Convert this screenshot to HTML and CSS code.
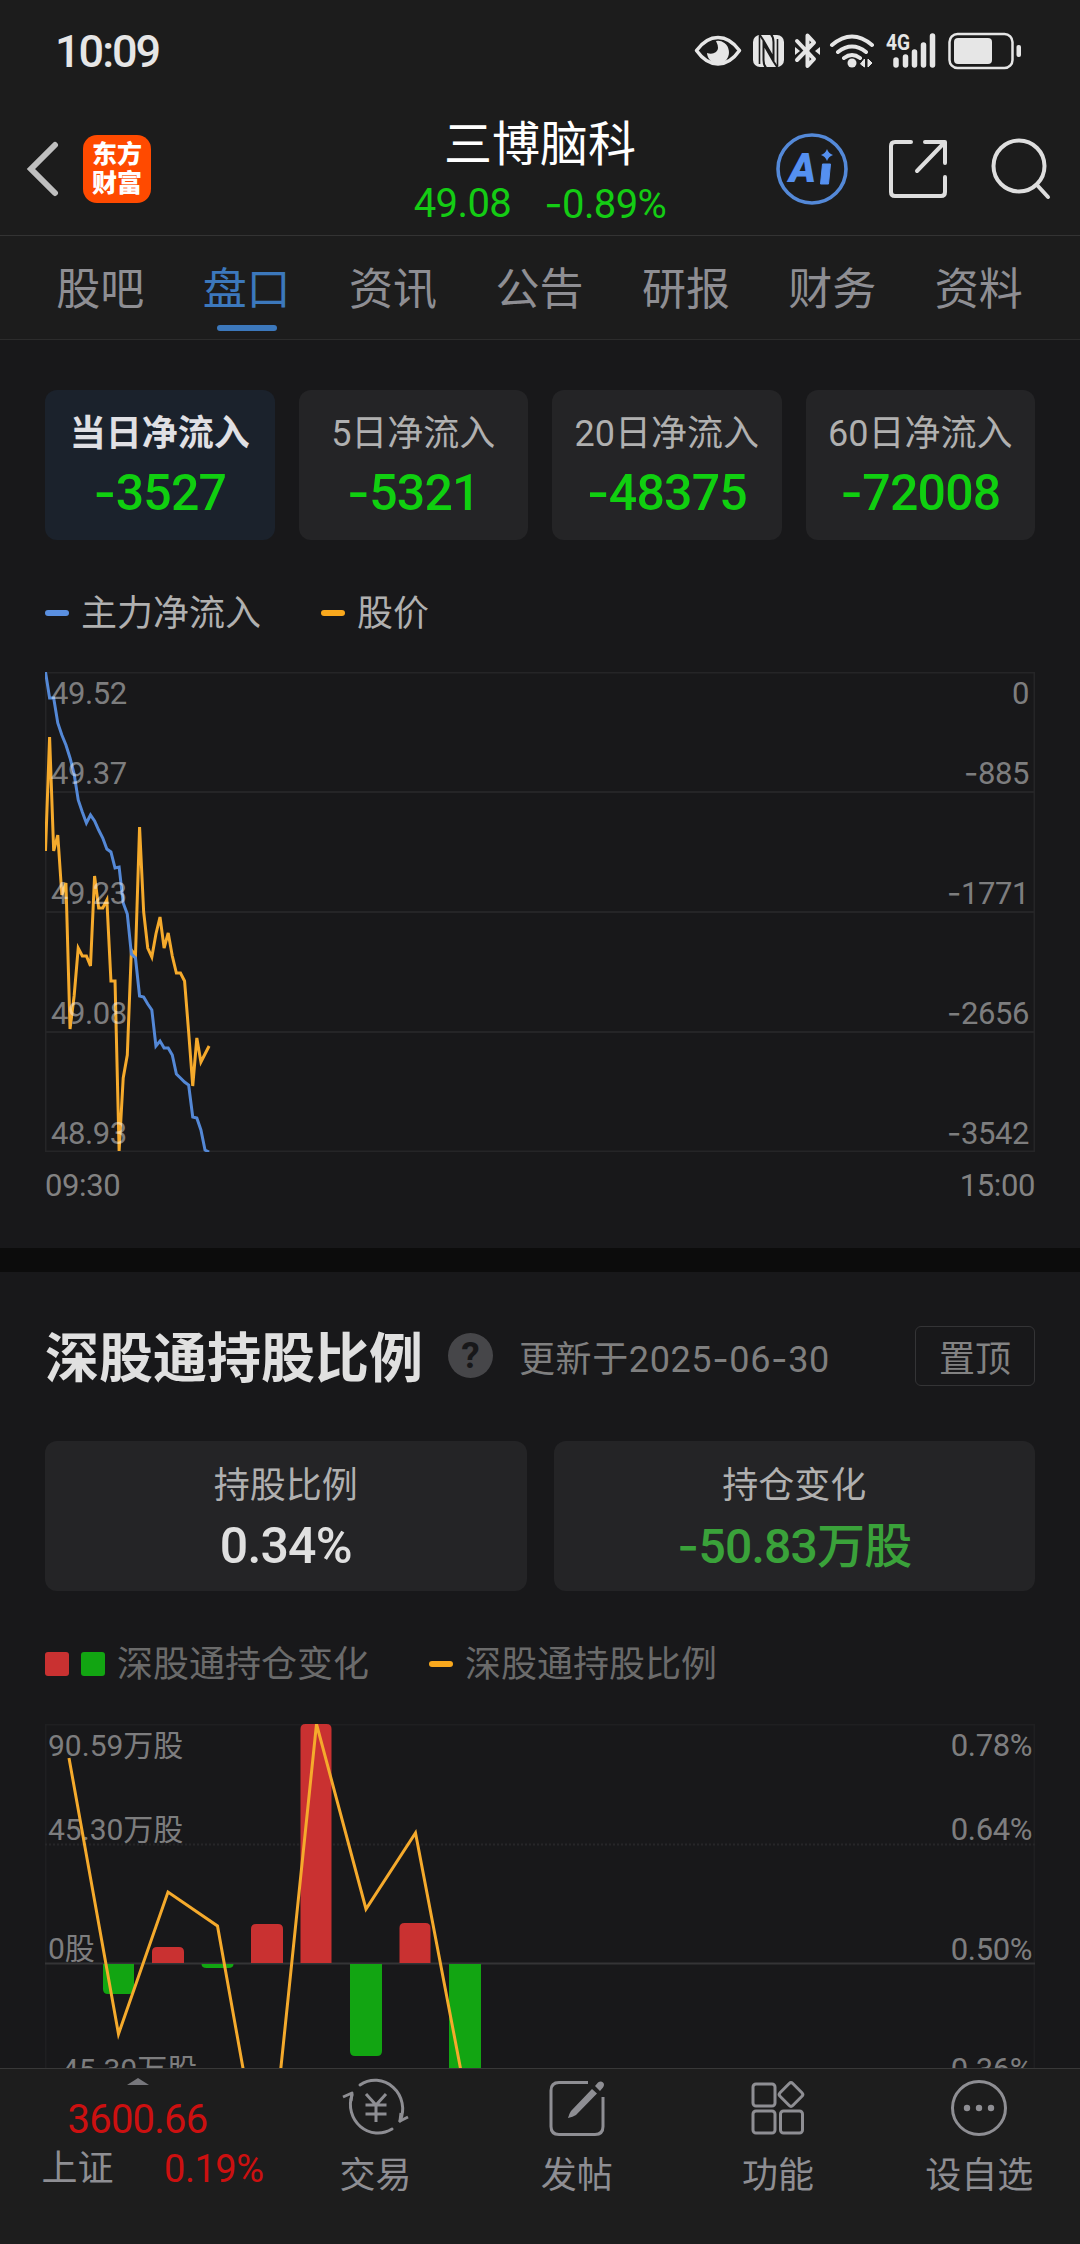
FILE: index.html
```
<!DOCTYPE html>
<html lang="zh-CN">
<head>
  <meta charset="UTF-8" />
  <meta name="viewport" content="width=device-width, initial-scale=1.0"/>
  <title>三博脑科 - 盘口</title>
  <link rel="stylesheet" href="styles.css">
</head>
<body>
  <div class="app">
    <div class="status-bar">
      <span class="clock">10:09</span>
      <svg class="status-icons" viewBox="0 0 330 40" width="330" height="40">
        <!-- eye -->
        <path d="M2.500 19.500Q12 6.500 24 6.500T45.500 19.500Q36 33 24 33T2.500 19.500Z" fill="none" stroke="#e6e6e6" stroke-width="3.500" stroke-linejoin="round"/>
        <path d="M22 10a11 11.500 0 1 1-9 12q5 2 9-1t0-11z" fill="#e6e6e6"/>
        <!-- nfc -->
        <rect x="59" y="4" width="31" height="32" rx="7" fill="#e6e6e6"/>
        <path d="M65.500 3.500q2 3 4 6L79.500 27V11q0-5-2.500-7.500M83.500 36.500q-2-3-4-6L69.500 13v16q0 5 2.500 7.500" fill="none" stroke="#1c1c1c" stroke-width="2"/>
        <path d="M65.500 5v28M83.500 8v27" stroke="#1c1c1c" stroke-width="1.600"/>
        <!-- bluetooth -->
        <path d="M103 10l17 18-6.500 7V4.500l6.500 7L103 29" fill="none" stroke="#e6e6e6" stroke-width="4" stroke-linejoin="round" stroke-linecap="round"/>
        <path d="M101 16l5 4-5 4zM126 16l-5 4 5 4z" fill="#e6e6e6"/>
        <!-- wifi -->
        <path d="M138 14q20-17 40 0M144 21q14-11 28 0M150 27q8-6 16 0" fill="none" stroke="#e6e6e6" stroke-width="4" stroke-linecap="round"/>
        <circle cx="158" cy="32" r="4.500" fill="#e6e6e6"/>
        <path d="M170.500 28v8l-4-3zM174 28v8l4-4z" fill="#e6e6e6" stroke="#e6e6e6" stroke-width="1"/>
        <!-- signal -->
        <text x="192" y="19" class="net" textLength="24" lengthAdjust="spacingAndGlyphs">4G</text>
        <path d="M202 29v5M211.500 26v8M220.500 21v13M229.500 14v20M238.500 5v29" stroke="#e6e6e6" stroke-width="5.500" stroke-linecap="round"/>
        <!-- battery -->
        <rect x="255.500" y="3" width="63" height="34" rx="8" fill="none" stroke="#e6e6e6" stroke-width="2.500"/>
        <rect x="260" y="7" width="38" height="26" rx="4" fill="#e6e6e6"/>
        <rect x="322.500" y="14" width="4.500" height="12" rx="2" fill="#e6e6e6"/>
      </svg>
    </div>

    <header class="header">
      <div class="header-left">
        <svg viewBox="0 0 34 56" width="34" height="56"><path d="M30 4L6 28l24 24" fill="none" stroke="#bfbfbf" stroke-width="6" stroke-linecap="round"/></svg>
        <div class="logo"><span>东方</span><span>财富</span></div>
      </div>
      <div class="stock">
        <h1>三博脑科</h1>
        <p class="quote"><span>49.08</span><span><i>-</i>0.89%</span></p>
      </div>
      <div class="header-right">
        <svg viewBox="0 0 72 72" width="72" height="72">
          <circle cx="36" cy="36" r="34" fill="none" stroke="#5489d8" stroke-width="3.600"/>
          <text x="13" y="49" class="ai">A</text>
          <path d="M46.500 31h8l-2 20h-8z" fill="#5590f0" stroke="#5590f0" stroke-linejoin="round"/>
          <path d="M51 16q1.500 4.500 6 6-4.500 1.500-6 6-1.500-4.500-6-6 4.500-1.500 6-6z" fill="#5590f0"/>
        </svg>
        <svg viewBox="0 0 60 60" width="60" height="60"><path d="M22 3H6q-4 0-4 4v46q0 4 4 4h46q4 0 4-4V38M36 3h20v21M55 4L28 32" fill="none" stroke="#dedede" stroke-width="4" stroke-linecap="round" stroke-linejoin="round"/></svg>
        <svg viewBox="0 0 60 62" width="60" height="62"><circle cx="28" cy="28" r="25.500" fill="none" stroke="#dedede" stroke-width="4"/><path d="M46 47l11 12" stroke="#dedede" stroke-width="4" stroke-linecap="round"/></svg>
      </div>
    </header>

    <nav class="tabs">
      <a>股吧</a>
      <a class="active">盘口</a>
      <a>资讯</a>
      <a>公告</a>
      <a>研报</a>
      <a>财务</a>
      <a>资料</a>
    </nav>

    <main>
      <section class="flow">
        <div class="cards">
          <div class="card active"><span class="label">当日净流入</span><b><i>-</i>3527</b></div>
          <div class="card"><span class="label">5日净流入</span><b><i>-</i>5321</b></div>
          <div class="card"><span class="label">20日净流入</span><b><i>-</i>48375</b></div>
          <div class="card"><span class="label">60日净流入</span><b><i>-</i>72008</b></div>
        </div>
        <div class="legend">
          <span><em class="dash blue"></em>主力净流入</span>
          <span><em class="dash orange"></em>股价</span>
        </div>
        <svg class="chart" viewBox="0 0 990 480" width="990" height="480">
          <path class="grid" d="M.5 .5H989.500V479.500H.5zM0 120H990M0 240H990M0 360H990"/>
          <!-- x unit is one trading minute -->
          <g transform="translate(.5 0) scale(4.090 1)">
            <polyline class="line price" points="0,179 1,65 2,179 3,163 4,223 5,211 6,357 7,324 8,276 9,284 10,284 11,294 12,204 13,236 14,236 15,228 16,309 17,309 18,479 19,406 20,383 21,278 22,283 23,155 24,240 25,276 26,285 27,262 28,245 29,276 30,261 31,284 32,301 33,301 34,309 35,360 36,414 37,366 38,390 39,382 40,374"/>
            <polyline class="line main-flow" points="0,0 1,26 2,26 3,51 4,63 5,73 6,86 7,102 8,128 9,140 10,151 11,143 12,149 13,158 14,166 15,177 16,180 17,196 18,195 19,231 20,242 21,282 22,286 23,324 24,325 25,332 26,338 27,374 28,369 29,376 30,376 31,383 32,402 33,406 34,410 35,413 36,445 37,446 38,458 39,478 40,480"/>
          </g>
          <g class="axis">
            <text x="6" y="32">49.52</text>
            <text x="6" y="112">49.37</text>
            <text x="6" y="232">49.23</text>
            <text x="6" y="352">49.08</text>
            <text x="6" y="472">48.93</text>
          </g>
          <g class="axis end">
            <text x="984" y="32">0</text>
            <text x="984" y="112"><tspan class="neg">-</tspan>885</text>
            <text x="984" y="232"><tspan class="neg">-</tspan>1771</text>
            <text x="984" y="352"><tspan class="neg">-</tspan>2656</text>
            <text x="984" y="472"><tspan class="neg">-</tspan>3542</text>
          </g>
        </svg>
        <div class="times"><span>09:30</span><span>15:00</span></div>
      </section>

      <section class="holding">
        <div class="section-head">
          <h2>深股通持股比例</h2>
          <span class="help">?</span>
          <span class="updated">更新于2025<i>-</i>06<i>-</i>30</span>
          <button>置顶</button>
        </div>
        <div class="cards wide">
          <div class="card"><span class="label">持股比例</span><b>0.34%</b></div>
          <div class="card down"><span class="label">持仓变化</span><b><i>-</i>50.83万股</b></div>
        </div>
        <div class="legend dim">
          <span><em class="box red"></em><em class="box green"></em>深股通持仓变化</span>
          <span><em class="dash orange"></em>深股通持股比例</span>
        </div>
        <svg class="chart" viewBox="0 0 990 480" width="990" height="480">
          <path class="grid faint" d="M.5 .5H989.500V479.500H.5z"/>
          <path class="grid dotted" d="M0 120.500H990M0 360.500H990"/>
          <path class="grid zero" d="M0 239.500H990"/>
          <g class="axis small">
            <text x="3" y="32">90.59万股</text>
            <text x="3" y="116">45.30万股</text>
            <text x="3" y="235">0股</text>
            <text x="3" y="356"><tspan class="neg">-</tspan>45.30万股</text>
          </g>
          <g class="axis end">
            <text x="987" y="32">0.78%</text>
            <text x="987" y="116">0.64%</text>
            <text x="987" y="236">0.50%</text>
            <text x="987" y="356">0.36%</text>
          </g>
          <g fill="#c93131">
            <path d="M107 239v-11q0-5 5-5h22q5 0 5 5v11z"/>
            <path d="M206 239v-34q0-5 5-5h22q5 0 5 5v34z"/>
            <path d="M255.500 239V5q0-5 5-5h21q5 0 5 5v234z"/>
            <path d="M354.500 239v-35q0-5 5-5h21q5 0 5 5v35z"/>
          </g>
          <g fill="#12a512">
            <path d="M58 240v25q0 5 5 5h21q5 0 5-5v-25z"/>
            <path d="M156.500 240q0 4 5 4h22q5 0 5-4z"/>
            <path d="M305 240v87q0 5 5 5h22q5 0 5-5v-87z"/>
            <path d="M404 240v150h32v-150z"/>
          </g>
          <polyline class="line ratio" points="24,34 73.500,310 123,168 172.500,202 222,478 271.500,0 321,185 370.500,109 420,368"/>
        </svg>
      </section>
    </main>

    <footer class="bottom-bar">
      <div class="index">
        <span class="arrow"></span>
        <span class="point">3600.66</span>
        <div class="index-row"><span>上证</span><span class="up">0.19%</span></div>
      </div>
      <a class="action">
        <svg viewBox="0 0 68 60" width="68" height="60">
          <g fill="none" stroke="#8e8e93" stroke-width="3">
            <path d="M18 7A27.500 28.500 0 0 1 58 43M50 51A27.500 28.500 0 0 1 10 17" stroke-linecap="round"/>
            <path d="M1 19l9-4-1 8M66 39l-8 4 1-8" stroke-linejoin="round"/>
            <path d="M24 16l10 11 10-11M23.500 27h21M23.500 36h21M34 27v17"/>
          </g>
        </svg>
        交易
      </a>
      <a class="action">
        <svg viewBox="0 0 68 60" width="68" height="60">
          <path d="M45 4.500H16q-8 0-8 8v36q0 8 8 8h36q8 0 8-8V19" fill="none" stroke="#8e8e93" stroke-width="3"/>
          <path d="M49 11l5 4.500L33 37q-3 2-8 3 1-4 3-7zM52 8l3-3.500q3-2 5 0t0 5L57 13z" fill="#8e8e93"/>
        </svg>
        发帖
      </a>
      <a class="action">
        <svg viewBox="0 0 68 60" width="68" height="60">
          <g fill="none" stroke="#8e8e93" stroke-width="3">
            <rect x="9" y="6" width="22" height="22" rx="3"/>
            <rect x="9" y="33" width="22" height="22" rx="3"/>
            <rect x="36.500" y="33" width="22" height="22" rx="3"/>
            <rect x="38" y="7.500" width="18" height="18" rx="2.500" transform="rotate(45 47 16.500)"/>
          </g>
        </svg>
        功能
      </a>
      <a class="action">
        <svg viewBox="0 0 68 60" width="68" height="60">
          <circle cx="34" cy="30" r="26.500" fill="none" stroke="#8e8e93" stroke-width="3"/>
          <circle cx="22" cy="30" r="3.200" fill="#8e8e93"/>
          <circle cx="34" cy="30" r="3.200" fill="#8e8e93"/>
          <circle cx="46" cy="30" r="3.200" fill="#8e8e93"/>
        </svg>
        设自选
      </a>
    </footer>
  </div>
</body>
</html>
```
FILE: styles.css
```
* {
  margin: 0;
  padding: 0;
  box-sizing: border-box;
}

body {
  font-family: Roboto, "Noto Sans CJK SC", sans-serif;
  background: #18181a;
  color: #e0e0e0;
  overflow: hidden;
}

svg {
  display: block;
  flex: none;
}

/* wider minus sign */
i,
.neg {
  font-family: Inter, sans-serif;
  font-style: normal;
}

.app {
  display: flex;
  flex-direction: column;
  width: 1080px;
  height: 2244px;
}

.status-bar {
  display: flex;
  justify-content: space-between;
  height: 102px;
  padding: 31px 56px 0 55px;
  background: #1c1c1c;
}

.clock {
  font-size: 45px;
  font-weight: 500;
  line-height: 42px;
  letter-spacing: -2px;
  color: #e6e6e6;
}

.net {
  font-size: 22px;
  font-weight: 700;
  fill: #e6e6e6;
}

.header {
  display: grid;
  grid-template-columns: 300px 1fr 300px;
  height: 134px;
  background: #1c1c1c;
  border-bottom: 1px solid #333;
}

.header-left {
  display: flex;
  align-items: center;
  gap: 24px;
  padding-left: 25px;
}

.logo {
  display: flex;
  flex-direction: column;
  justify-content: center;
  align-items: center;
  width: 68px;
  height: 68px;
  border-radius: 14px;
  background: #ff4a00;
  color: #fff;
  font-size: 25px;
  font-weight: 900;
  line-height: 29px;
}

.stock {
  padding-top: 14px;
  text-align: center;
}

.stock h1 {
  font-size: 48px;
  font-weight: 400;
  line-height: 58px;
  color: #fff;
}

.quote {
  display: flex;
  justify-content: center;
  gap: 33px;
  font-size: 40px;
  line-height: 59px;
  letter-spacing: -0.6px;
  color: #14cc14;
}

.header-right {
  display: flex;
  align-items: center;
  justify-content: flex-end;
  gap: 42px;
  padding-right: 29px;
}

.header-right svg:first-child {
  margin-right: -1px;
}

.ai {
  font-size: 41px;
  font-weight: 900;
  fill: #5590f0;
  font-style: italic;
}

.tabs {
  display: flex;
  height: 104px;
  padding: 0 28px 0 27px;
  background: #1c1c1c;
  border-bottom: 1px solid #2c2c2c;
}

.tabs a {
  display: flex;
  flex: 1;
  flex-direction: column;
  align-items: center;
  padding-top: 24px;
  font-size: 44px;
  line-height: 60px;
  color: #8e8e93;
}

.tabs .active {
  color: #3c78bc;
}

.tabs .active::after {
  content: "";
  width: 60px;
  height: 6px;
  margin-top: 5px;
  border-radius: 3px;
  background: #3c78bc;
}

main {
  flex: 1;
  min-height: 0;
  overflow: hidden;
}

.flow {
  height: 908px;
  padding: 50px 45px 0;
}

.cards {
  display: grid;
  grid-template-columns: repeat(4, 1fr);
  gap: 24px;
}

.cards.wide {
  grid-template-columns: 1fr 1fr;
  gap: 27px;
}

.card {
  display: flex;
  flex-direction: column;
  align-items: center;
  height: 150px;
  padding-top: 19px;
  border-radius: 12px;
  background: #242426;
}

.card .label {
  font-size: 36px;
  line-height: 50px;
  color: #b0b0b0;
}

.card b {
  font-size: 50px;
  font-weight: 500;
  line-height: 66px;
  letter-spacing: -0.8px;
  color: #10cf10;
}

.card.active {
  background: #1b222c;
}

.card.active .label {
  font-weight: 700;
  color: #e0e0e4;
}

.wide .card {
  padding-top: 20px;
}

.wide .card b {
  line-height: 70px;
  color: #e0e0e0;
}

.wide .down b {
  font-size: 48px;
  color: #3aa23a;
}

.legend {
  display: flex;
  gap: 60px;
  padding-top: 47px;
  font-size: 36px;
  line-height: 50px;
  color: #b0b0b0;
}

/* the text sits a little lower than the marks */
.legend span {
  display: flex;
  align-items: center;
  padding-top: 2px;
}

.legend em {
  margin-top: -3px;
}

.legend.dim {
  color: #6b6b6b;
}

.dash {
  width: 24px;
  height: 6px;
  margin-right: 12px;
  border-radius: 3px;
}

.box {
  width: 24px;
  height: 24px;
  margin-right: 12px;
  border-radius: 3px;
}

.blue {
  background: #5a8fe0;
}

.orange {
  background: #f9a81d;
}

.red {
  background: #c93131;
}

.green {
  background: #12a512;
}

.chart {
  margin-top: 33px;
}

.grid {
  fill: none;
  stroke: #252527;
  stroke-width: 2;
}

.grid.faint {
  stroke: #1f1f21;
}

.grid.dotted {
  stroke: #262628;
  stroke-dasharray: 2 2;
}

.grid.zero {
  stroke: #343436;
}

.line {
  fill: none;
  stroke-width: 3;
  vector-effect: non-scaling-stroke;
}

.price,
.ratio {
  stroke: #f5aa2c;
}

.main-flow {
  stroke: #5488d6;
}

.axis {
  font-size: 31px;
  letter-spacing: -0.4px;
  fill: rgba(255, 255, 255, 0.45);
}

.axis.small {
  font-size: 30px;
  letter-spacing: 0;
}

.axis.end {
  text-anchor: end;
}

.times {
  display: flex;
  justify-content: space-between;
  padding-top: 14px;
  font-size: 31px;
  line-height: 40px;
  letter-spacing: -0.4px;
  color: #828282;
}

.holding {
  padding: 54px 45px 0;
  border-top: 24px solid #0c0c0c;
}

.holding .chart {
  margin-top: 34px;
}

.section-head {
  display: flex;
  align-items: center;
  height: 60px;
  margin-bottom: 55px;
}

.section-head h2 {
  padding-top: 7px;
  font-size: 54px;
  font-weight: 600;
  line-height: 60px;
}

.help {
  width: 45px;
  height: 45px;
  margin: -1px 26px 0 25px;
  border-radius: 50%;
  background: #464649;
  color: #18181a;
  font-size: 37px;
  font-weight: 700;
  line-height: 45px;
  text-align: center;
}

.updated {
  font-size: 36px;
  letter-spacing: 0.6px;
  color: #7f7f7f;
}

button {
  width: 120px;
  height: 60px;
  margin-left: auto;
  border: 1px solid #343436;
  border-radius: 6px;
  background: none;
  color: #828282;
  font-family: inherit;
  font-size: 36px;
}

.bottom-bar {
  display: flex;
  height: 176px;
  background: #1d1d1d;
  border-top: 1px solid #383838;
}

.index {
  display: flex;
  flex-direction: column;
  align-items: center;
  width: 275px;
  padding-top: 9px;
  color: #cc1010;
}

.arrow {
  border: 11px solid transparent;
  border-top: 0;
  border-bottom: 7px solid #77777c;
}

.point {
  margin-top: 11px;
  font-size: 40px;
  line-height: 48px;
  letter-spacing: -0.8px;
}

.index-row {
  display: flex;
  justify-content: space-between;
  width: 222px;
  margin: 1px 0 0 30px;
  font-size: 36px;
  line-height: 48px;
  color: #8e8e93;
}

.index-row .up {
  font-size: 38px;
  letter-spacing: -0.5px;
  color: #cc1010;
}

.action {
  display: flex;
  flex: 1;
  flex-direction: column;
  align-items: center;
  gap: 13px;
  padding-top: 9px;
  font-size: 36px;
  line-height: 50px;
  color: #8e8e93;
}
```
